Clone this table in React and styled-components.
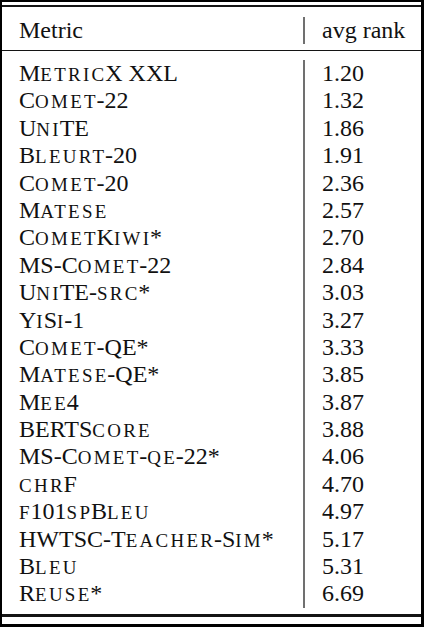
import styled, { createGlobalStyle } from 'styled-components'

const GlobalStyle = createGlobalStyle`
    html, body {
        margin: 0;
        padding: 0;
        background: #fff;
    }
`

const rows = [
    ['MetricX XXL', '1.20'],
    ['Comet-22', '1.32'],
    ['UniTE', '1.86'],
    ['Bleurt-20', '1.91'],
    ['Comet-20', '2.36'],
    ['Matese', '2.57'],
    ['CometKiwi*', '2.70'],
    ['MS-Comet-22', '2.84'],
    ['UniTE-src*', '3.03'],
    ['YiSi-1', '3.27'],
    ['Comet-QE*', '3.33'],
    ['Matese-QE*', '3.85'],
    ['Mee4', '3.87'],
    ['BERTScore', '3.88'],
    ['MS-Comet-qe-22*', '4.06'],
    ['chrF', '4.70'],
    ['f101spBleu', '4.97'],
    ['HWTSC-Teacher-Sim*', '5.17'],
    ['Bleu', '5.31'],
    ['Reuse*', '6.69'],
]

const Frame = styled.div`
    width: 424px;
    height: 627px;
    box-sizing: border-box;
    border-style: solid;
    border-color: #000;
    border-width: 2px 3px 3px 2px;
    padding-top: 3px;
    background: #fff;
    display: flex;
    flex-direction: column;
    font-family: "Liberation Serif", "Times New Roman", serif;
    font-size: 24px;
    color: #111;
`

const Rule = styled.div`
    height: ${p => p.$w}px;
    background: #141414;
    flex: 0 0 auto;
`

const Section = styled.div`
    display: grid;
    grid-template-columns: 301px 1fr;
    padding: ${p => p.$pad};
    line-height: ${p => p.$lh};
`

const NameCol = styled.div`
    padding-left: 17px;
    white-space: nowrap;
`

const ValueCol = styled.div`
    border-left: 2px solid #707070;
    padding-left: 17px;
    white-space: nowrap;
`

const Line = styled.div`
    height: ${p => p.$lh};
`

// small caps: shrunk capitals with wide tracking, trailing space trimmed
const Small = styled.span`
    font-size: 0.79em;
    text-transform: uppercase;
    letter-spacing: 2.3px;
    margin-right: -1.3px;
`

const ScName = ({ text }) => {
    const parts = text.match(/[a-z]+|[^a-z]+/g)
    return parts.map((part, i) =>
        /[a-z]/.test(part[0])
            ? <Small key={i}>{part}</Small>
            : <span key={i}>{part}</span>
    )
}

const App = () => {
    return (
        <>
            <GlobalStyle />
            <Frame>
                <Rule $w={2} />
                <Section $pad="10px 0 6px" $lh="27px">
                    <NameCol>Metric</NameCol>
                    <ValueCol>avg rank</ValueCol>
                </Section>
                <Rule $w={1} />
                <Section $pad="9px 0 6px" $lh="27.4px">
                    <NameCol>
                        {rows.map(([name]) => (
                            <Line key={name} $lh="27.4px"><ScName text={name} /></Line>
                        ))}
                    </NameCol>
                    <ValueCol>
                        {rows.map(([name, rank]) => (
                            <Line key={name} $lh="27.4px">{rank}</Line>
                        ))}
                    </ValueCol>
                </Section>
                <Rule $w={3} />
            </Frame>
        </>
    )
}

export default App
